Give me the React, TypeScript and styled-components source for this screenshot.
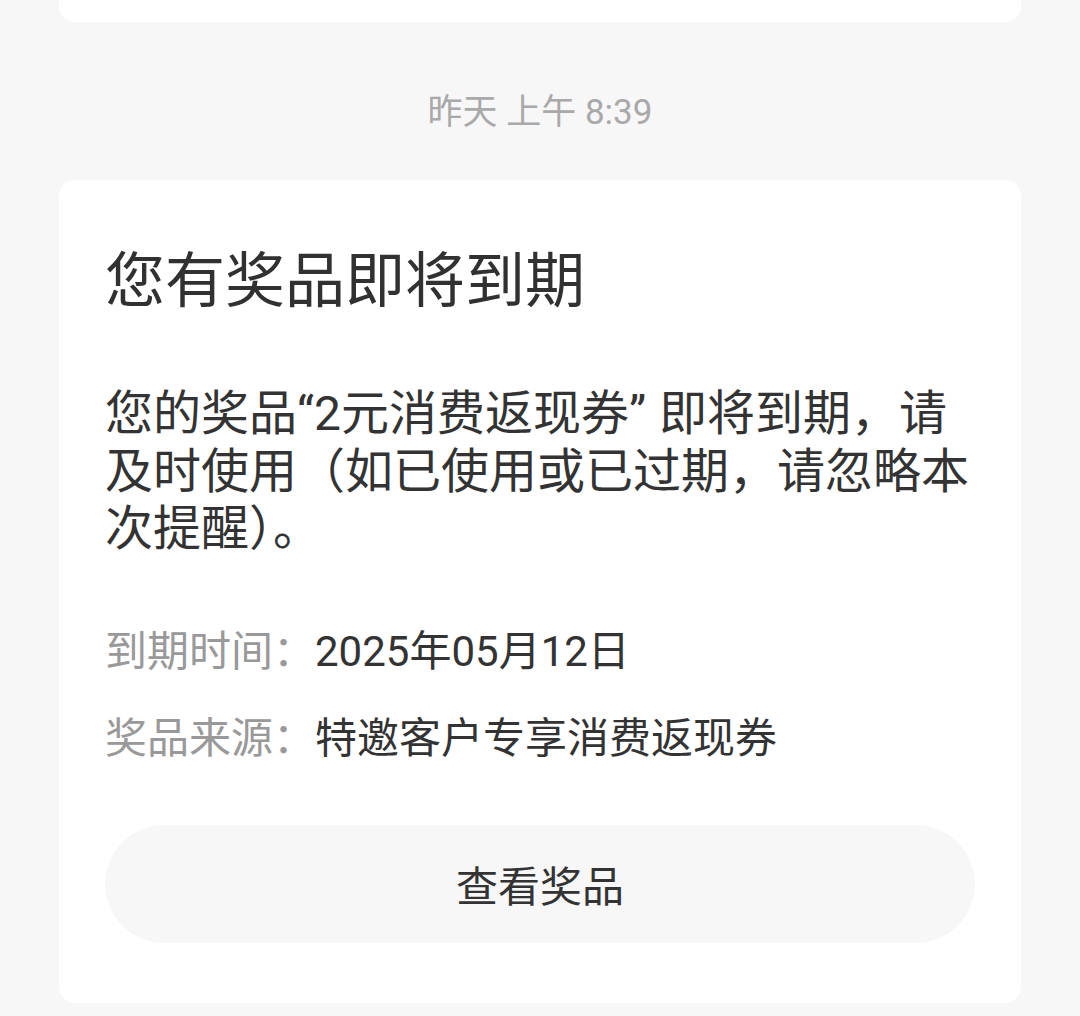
import styled, { createGlobalStyle } from "styled-components"

const GlobalStyle = createGlobalStyle`
  html, body {
    margin: 0;
    padding: 0;
    background: #f7f7f7;
    font-family: Roboto, "Noto Sans CJK SC", sans-serif;
  }
`

const Page = styled.div`
  width: 1080px;
  height: 1016px;
  overflow: hidden;
  box-sizing: border-box;
  padding: 0 59px;
  background: #f7f7f7;
`

const PrevCard = styled.div`
  height: 22px;
  background: #ffffff;
  border-radius: 0 0 16px 16px;
`

const Timestamp = styled.div`
  padding: 71px 0 47px;
  text-align: center;
  font-size: 35px;
  line-height: 40px;
  color: #a9a9a9;
`

const Card = styled.div`
  background: #ffffff;
  border-radius: 16px;
  padding: 64px 46px 60px;
  display: flex;
  flex-direction: column;
`

const Title = styled.h1`
  margin: 0;
  font-size: 60px;
  line-height: 76px;
  font-weight: 400;
  color: #313131;
`

const Body = styled.p`
  margin: 65px 0 0;
  font-size: 48px;
  line-height: 57.6px;
  color: #333333;
`

// closing quote in the reference leaves some air before the next word
const CloseQuote = styled.span`
  margin-right: 13px;
`

const Details = styled.div`
  margin-top: 64px;
  display: flex;
  flex-direction: column;
  gap: 27px;
`

const Row = styled.div`
  display: flex;
  font-size: 42px;
  line-height: 60px;
`

const Label = styled.span`
  color: #999999;
`

const Value = styled.span`
  color: #333333;
`

const ActionButton = styled.button`
  margin-top: 56px;
  height: 118px;
  width: 100%;
  border: 0;
  border-radius: 59px;
  background: #f7f7f7;
  color: #333333;
  font-family: inherit;
  font-size: 42px;
  cursor: pointer;
`

const rows = [
  { label: "到期时间：", value: "2025年05月12日" },
  { label: "奖品来源：", value: "特邀客户专享消费返现券" },
]

export default function App() {
  return (
    <>
      <GlobalStyle />
      <Page>
        <PrevCard />
        <Timestamp>昨天 上午 8:39</Timestamp>
        <Card>
          <Title>您有奖品即将到期</Title>
          <Body>
            您的奖品“2元消费返现券<CloseQuote>”</CloseQuote>即将到期，请及时使用（如已使用或已过期，请忽略本次提醒）。
          </Body>
          <Details>
            {rows.map((r) => (
              <Row key={r.label}>
                <Label>{r.label}</Label>
                <Value>{r.value}</Value>
              </Row>
            ))}
          </Details>
          <ActionButton>查看奖品</ActionButton>
        </Card>
      </Page>
    </>
  )
}
